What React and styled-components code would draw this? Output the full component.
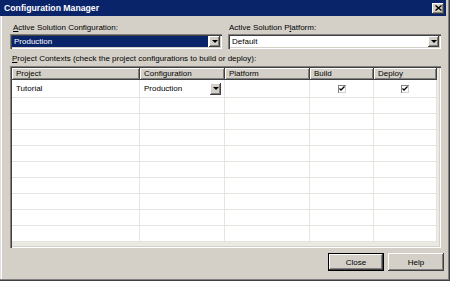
import React from "react";
import styled, { createGlobalStyle } from "styled-components";

const GlobalStyle = createGlobalStyle`
  html, body { margin: 0; padding: 0; background: #d4d0c8; }
  body { font-family: "Liberation Sans", Arial, sans-serif; font-size: 8px; }
  * { box-sizing: border-box; }
`;

const Window = styled.div`
  width: 450px;
  height: 281px;
  background: #d4d0c8;
  display: flex;
  flex-direction: column;
  padding: 0 3px 2px 2px;
  box-shadow: inset -1px -1px #404040, inset -2px -2px #808080, inset 1px 0 #dfdfdf, inset 2px 0 #fff;
  overflow: hidden;
`;

const TitleBar = styled.div`
  height: 16px;
  margin: 0 1px 0 -2px;
  background: #0a246a;
  display: flex;
  align-items: center;
  justify-content: space-between;
  padding: 0 2px 0 4px;
`;

const Title = styled.span`
  color: #fff;
  font-weight: bold;
  font-size: 8.7px;
`;

const RaisedBtn = styled.div`
  background: #d4d0c8;
  box-shadow: inset -1px -1px #404040, inset 1px 1px #fff, inset -2px -2px #808080;
  display: flex;
  align-items: center;
  justify-content: center;
`;

const CloseX = styled(RaisedBtn)`
  width: 12px;
  height: 11px;
`;

const Body = styled.div`
  flex: 1;
  display: flex;
  flex-direction: column;
  padding: 5px 3px 0 8px;
`;

const TopRow = styled.div`
  display: grid;
  grid-template-columns: 212px 213px;
  column-gap: 6px;
`;

const Field = styled.div`
  display: flex;
  flex-direction: column;
`;

const Label = styled.div`
  height: 13px;
  line-height: 13px;
  padding-left: ${(p) => p.$indent || 1}px;
  color: #000;
  white-space: nowrap;
`;

const U = styled.span`
  text-decoration: underline;
`;

const Combo = styled.div`
  height: 15px;
  background: #fff;
  box-shadow: inset 1px 1px #808080, inset 2px 2px #404040, inset -1px -1px #fff, inset -2px -2px #d4d0c8;
  display: flex;
  align-items: stretch;
  padding: 2px;
`;

const ComboText = styled.div`
  flex: 1;
  line-height: 11px;
  padding-left: 2px;
  margin-right: 1px;
  background: ${(p) => (p.$selected ? "#0a246a" : "transparent")};
  color: ${(p) => (p.$selected ? "#fff" : "#000")};
`;

const DropBtn = styled(RaisedBtn)`
  width: ${(p) => p.$w || 11}px;
  height: ${(p) => p.$h || 11}px;
`;

const Arrow = styled.span`
  width: 0;
  height: 0;
  border-left: 3px solid transparent;
  border-right: 3px solid transparent;
  border-top: 3px solid #000;
`;

const SectionLabel = styled(Label)`
  margin-top: 3px;
  height: 14px;
  line-height: 14px;
`;

const GridBox = styled.div`
  height: 182px;
  width: 431px;
  background: #ebe9e4;
  box-shadow: inset 1px 1px #808080, inset 2px 2px #404040, inset -1px -1px #fff, inset -2px -2px #d4d0c8;
  padding: 2px;
`;

const Row = styled.div`
  display: grid;
  grid-template-columns: 128px 85px 85px 64px 63px;
  height: ${(p) => p.$h}px;
`;

const HeadCell = styled.div`
  background: #d4d0c8;
  box-shadow: inset -1px -1px #404040, inset 1px 1px #fff, inset -2px -2px #808080;
  line-height: 12px;
  padding-left: 4px;
  white-space: nowrap;
`;

const Cell = styled.div`
  background: #fff;
  border-right: 1px solid #e6e4de;
  border-bottom: 1px solid #e6e4de;
  display: flex;
  align-items: center;
  justify-content: ${(p) => (p.$center ? "center" : "space-between")};
  padding: ${(p) => (p.$center ? "0" : "0 3px 0 4px")};
`;

const Check = styled.div`
  width: 8px;
  height: 8px;
  background: #fff;
  box-shadow: inset 1px 1px #808080, inset -1px -1px #d4d0c8;
  display: flex;
  align-items: center;
  justify-content: center;
`;

const Footer = styled.div`
  display: flex;
  justify-content: flex-end;
  gap: 4px;
  padding: 5px 0 0 0;
`;

const Button = styled.button`
  width: 56px;
  height: 18px;
  font-family: inherit;
  font-size: 8px;
  color: #000;
  background: #d4d0c8;
  border: none;
  padding: 0;
  box-shadow: ${(p) =>
    p.$default
      ? "inset 0 0 0 1px #000, inset -2px -2px #404040, inset 2px 2px #fff, inset -3px -3px #808080"
      : "inset -1px -1px #404040, inset 1px 1px #fff, inset -2px -2px #808080"};
`;

const rows = Array.from({ length: 10 }, (_, i) => i);

function CheckMark() {
  return (
    <svg width="6" height="6" viewBox="0 0 6 6">
      <path d="M0.5 2.5 L2 4 L5.5 0.5" stroke="#000" strokeWidth="1.3" fill="none" />
    </svg>
  );
}

export default function App() {
  return (
    <>
      <GlobalStyle />
      <Window>
        <TitleBar>
          <Title>Configuration Manager</Title>
          <CloseX>
            <svg width="7" height="6" viewBox="0 0 7 6">
              <path d="M0.5 0.5 L6.5 5.5 M6.5 0.5 L0.5 5.5" stroke="#000" strokeWidth="1.4" />
            </svg>
          </CloseX>
        </TitleBar>
        <Body>
          <TopRow>
            <Field>
              <Label $indent={3}><U>A</U>ctive Solution Configuration:</Label>
              <Combo>
                <ComboText $selected>Production</ComboText>
                <DropBtn><Arrow /></DropBtn>
              </Combo>
            </Field>
            <Field>
              <Label>Active Solution P<U>l</U>atform:</Label>
              <Combo>
                <ComboText>Default</ComboText>
                <DropBtn><Arrow /></DropBtn>
              </Combo>
            </Field>
          </TopRow>
          <SectionLabel $indent={2}><U>P</U>roject Contexts (check the project configurations to build or deploy):</SectionLabel>
          <GridBox>
            <Row $h={12}>
              <HeadCell>Project</HeadCell>
              <HeadCell>Configuration</HeadCell>
              <HeadCell>Platform</HeadCell>
              <HeadCell>Build</HeadCell>
              <HeadCell>Deploy</HeadCell>
            </Row>
            {rows.map((i) =>
              i === 0 ? (
                <Row key={i} $h={18}>
                  <Cell>Tutorial</Cell>
                  <Cell>
                    Production
                    <DropBtn $w={11} $h={12}><Arrow /></DropBtn>
                  </Cell>
                  <Cell />
                  <Cell $center><Check><CheckMark /></Check></Cell>
                  <Cell $center><Check><CheckMark /></Check></Cell>
                </Row>
              ) : (
                <Row key={i} $h={16}>
                  <Cell />
                  <Cell />
                  <Cell />
                  <Cell />
                  <Cell />
                </Row>
              )
            )}
          </GridBox>
          <Footer>
            <Button $default>Close</Button>
            <Button>Help</Button>
          </Footer>
        </Body>
      </Window>
    </>
  );
}
